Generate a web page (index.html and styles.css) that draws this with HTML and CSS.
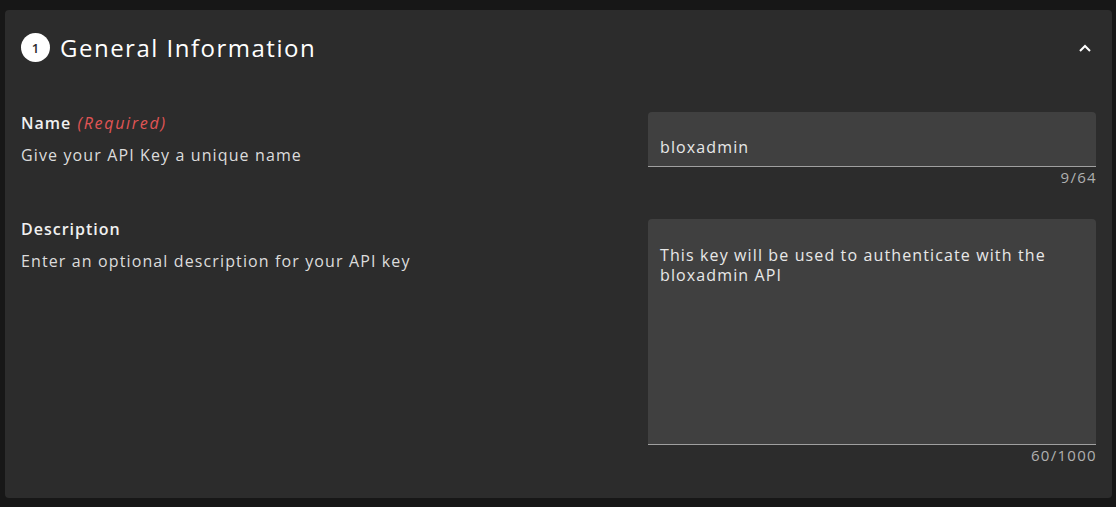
FILE: index.html
```html
<!DOCTYPE html>
<html>
<head>
<meta charset="utf-8">
<link rel="stylesheet" href="styles.css">
</head>
<body>
<div class="card">
  <div class="header">
    <div class="step">1</div>
    <h2 class="title">General Information</h2>
    <svg class="chevron" width="14" height="10" viewBox="0 0 14 10"><path d="M2 8 L7 3 L12 8" fill="none" stroke="#fff" stroke-width="2"/></svg>
  </div>
  <div class="row row-name">
    <div class="info">
      <div class="label">Name <span class="req">(Required)</span></div>
      <div class="help">Give your API Key a unique name</div>
    </div>
    <div class="field">
      <div class="input">bloxadmin</div>
      <div class="counter">9/64</div>
    </div>
  </div>
  <div class="row row-desc">
    <div class="info">
      <div class="label">Description</div>
      <div class="help">Enter an optional description for your API key</div>
    </div>
    <div class="field">
      <div class="textarea">This key will be used to authenticate with the bloxadmin API</div>
      <div class="counter">60/1000</div>
    </div>
  </div>
</div>
</body>
</html>
```
FILE: styles.css
```css
html, body { margin: 0; padding: 0; }
body {
  background: #171717;
  font-family: "Open Sans", sans-serif;
  color: #e6e6e6;
  padding: 10px 4px 9px 5px;
  height: 507px;
  box-sizing: border-box;
}
.card {
  background: #2c2c2c;
  border-radius: 4px;
  height: 488px;
  padding: 0 16px;
  box-sizing: border-box;
}
.header {
  display: flex;
  align-items: center;
  height: 75px;
}
.step {
  width: 29px; height: 29px;
  border-radius: 50%;
  background: #fff;
  color: #2c2c2c;
  font-size: 13px;
  font-weight: 600;
  display: flex; align-items: center; justify-content: center;
  margin-right: 10px;
}
.title {
  margin: 0;
  font-size: 24px;
  font-weight: 500;
  color: #fff;
  flex: 1;
  letter-spacing: 1.5px;
}
.chevron { margin-right: 4px; }
.row { display: flex; justify-content: space-between; }
.row-name { margin-top: 27px; }
.row-desc { margin-top: 32px; }
.info { padding-top: 1px; }
.label { font-size: 16px; font-weight: 600; color: #f0f0f0; line-height: 20px; letter-spacing: 1px; }
.req { color: #e05555; font-style: italic; font-weight: 400; letter-spacing: 1.7px; margin-left: 1px; }
.help { font-size: 16px; line-height: 20px; margin-top: 12px; color: #dcdcdc; letter-spacing: 1.12px; }
.row-desc .field { margin-top: 1px; }
.field { width: 448px; }
.input {
  background: #404040;
  height: 55px;
  border-radius: 4px 4px 0 0;
  border-bottom: 1px solid #a0a0a0;
  box-sizing: border-box;
  padding: 25px 12px 0;
  font-size: 16px;
  line-height: 20px;
  color: #e8e8e8;
  letter-spacing: 1.12px;
}
.textarea {
  background: #404040;
  height: 226px;
  border-radius: 4px 4px 0 0;
  border-bottom: 1px solid #a0a0a0;
  box-sizing: border-box;
  padding: 26px 12px 0;
  font-size: 16px;
  line-height: 20px;
  color: #e8e8e8;
  letter-spacing: 1.12px;
}
.counter {
  text-align: right;
  font-size: 15px;
  color: #b0b0b0;
  line-height: 18px;
  margin-top: 1px;
  letter-spacing: 1.3px;
  margin-right: -1px;
}
```
